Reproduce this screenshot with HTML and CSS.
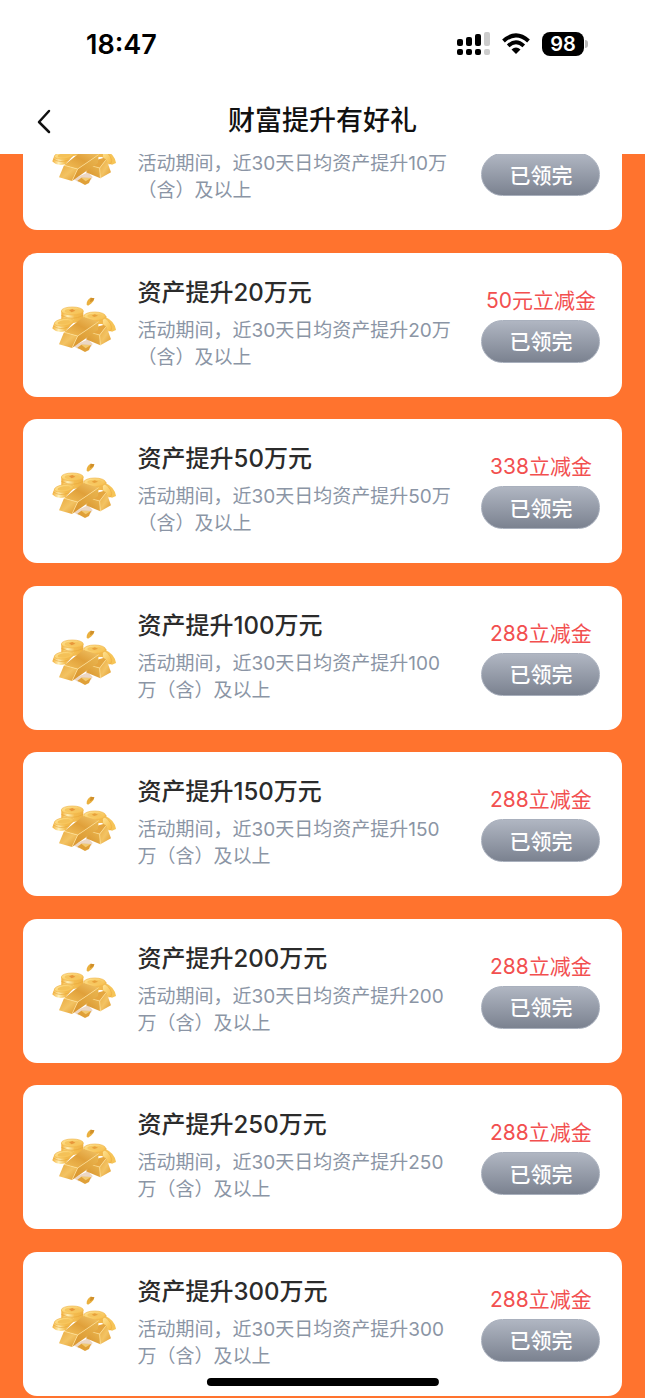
FILE: index.html
```html
<!DOCTYPE html>
<html lang="zh-CN">
<head>
    <meta charset="UTF-8">
    <meta name="viewport" content="width=device-width, initial-scale=1.0">
    <title>财富提升有好礼</title>
    <link rel="stylesheet" href="styles.css">
</head>
<body>
    <!-- shared gold picture -->
    <svg class="defs" width="0" height="0" aria-hidden="true">
        <defs>
            <linearGradient id="coinTop" x1="0" y1="0" x2="1" y2="1">
                <stop offset="0" stop-color="#ffe596"/>
                <stop offset="1" stop-color="#f5b944"/>
            </linearGradient>
            <linearGradient id="coinSide" x1="0" y1="0" x2="1" y2="0">
                <stop offset="0" stop-color="#f3ad35"/>
                <stop offset="0.3" stop-color="#fff0b8"/>
                <stop offset="0.6" stop-color="#f4bd50"/>
                <stop offset="1" stop-color="#eeb044"/>
            </linearGradient>
            <linearGradient id="barTop" x1="0" y1="1" x2="1" y2="0">
                <stop offset="0" stop-color="#f3bf58"/>
                <stop offset="0.5" stop-color="#e0a03a"/>
                <stop offset="1" stop-color="#f2c569"/>
            </linearGradient>
            <linearGradient id="barFront" x1="0" y1="0" x2="1" y2="1">
                <stop offset="0" stop-color="#e9ab42"/>
                <stop offset="0.5" stop-color="#f3c363"/>
                <stop offset="1" stop-color="#e09a2e"/>
            </linearGradient>
            <linearGradient id="barSide" x1="1" y1="0" x2="0" y2="1">
                <stop offset="0" stop-color="#eab650"/>
                <stop offset="1" stop-color="#d8922b"/>
            </linearGradient>
            <symbol id="gold" viewBox="36 30 192 168">
                <path d="M100 180l44-20 14 14-6 10-36 6z" fill="#d9b08a" opacity="0.5"/>
                <path d="M140 56q-1-14 12-21l11 2q0 9-10 16l-9 6z" fill="#eab03f"/>
                <path d="M152 35l11 2q-2 10-13 11z" fill="#cf8f2b"/>
                <!-- coins on the left -->
                <path d="M64 75v27q32 20 66 0V75z" fill="url(#coinSide)"/>
                <path d="M64 88q32 18 66 0" fill="none" stroke="#e9a83a" stroke-width="2"/>
                <ellipse cx="97" cy="75" rx="33" ry="12" fill="url(#coinTop)" stroke="#f0b54a" stroke-width="2"/>
                <ellipse cx="97" cy="75" rx="23" ry="7" fill="#f6c65f"/>
                <path d="M87 73l10-4 9 5-11 5z" fill="#e8963a"/>
                <path d="M43 110l-6 17q14 16 40 8l24-26z" fill="url(#coinSide)"/>
                <path d="M40 120q20 14 48 2" fill="none" stroke="#e9a83a" stroke-width="2"/>
                <ellipse cx="72" cy="109" rx="29" ry="11" fill="url(#coinTop)" stroke="#f0b54a" stroke-width="2" transform="rotate(-8 72 109)"/>
                <ellipse cx="72" cy="109" rx="19" ry="6" fill="#f4c158" transform="rotate(-8 72 109)"/>
                <!-- coins on the right -->
                <path d="M132 88v26h67V90z" fill="url(#coinSide)"/>
                <path d="M196 93q28 12 32 39l-12 5q-10-3-22-17z" fill="#f6c457"/>
                <path d="M190 95q-8 17 7 34 9 9 16 5 5-9-2-21-9-17-21-18z" fill="url(#coinTop)" stroke="#edae43" stroke-width="2"/>
                <ellipse cx="164" cy="91" rx="33" ry="13" fill="url(#coinTop)" stroke="#f0b54a" stroke-width="2"/>
                <ellipse cx="164" cy="90" rx="22" ry="7" fill="#f6c65f"/>
                <path d="M155 89l9-4 10 4-11 4z" fill="#e8a03a"/>
                <!-- small bar behind -->
                <path d="M150 128l40-11 9 4-20 26-31-7z" fill="#e5a63f"/>
                <path d="M150 139l29 8 2 31-43-18z" fill="url(#barSide)"/>
                <path d="M179 147l20-26 14 39-32 18z" fill="url(#barFront)"/>
                <path d="M150 139l29 8 20-26M179 147l2 31" fill="none" stroke="#ffe398" stroke-width="2"/>
                <!-- big bar in front -->
                <path d="M72 139l58-46 46 14-63 43z" fill="url(#barTop)"/>
                <path d="M113 150l63-43-2 25-78 54z" fill="url(#barSide)"/>
                <path d="M72 139l41 11-17 36-39-11z" fill="url(#barFront)"/>
                <path d="M72 139l41 11 63-43M113 150l-17 36" fill="none" stroke="#ffe398" stroke-width="2"/>
                <path d="M112 185l12-9 29 1-6 15-12 6z" fill="#e0a038"/>
                <path d="M124 176l29 1-16 10z" fill="#f3cb72"/>
            </symbol>
        </defs>
    </svg>

    <header class="header">
        <div class="status">
            <span class="time">18:47</span>
            <div class="status-icons">
                <svg width="33" height="24" viewBox="0 0 33 24" aria-hidden="true">
                    <rect x="0" y="7" width="6" height="7" rx="2"/>
                    <rect x="9" y="5" width="6" height="9" rx="2"/>
                    <rect x="18" y="2" width="6" height="12" rx="2"/>
                    <rect x="27" y="0" width="6" height="14" rx="2" fill="#ccc"/>
                    <rect x="0" y="17" width="6" height="6" rx="2"/>
                    <rect x="9" y="17" width="6" height="6" rx="2"/>
                    <rect x="18" y="17" width="6" height="6" rx="2"/>
                    <rect x="27" y="17" width="6" height="6" rx="2" fill="#ccc"/>
                </svg>
                <svg width="28" height="22" viewBox="0 0 28 22" aria-hidden="true">
                    <path d="M1.5 8Q14-3.4 26.5 8" fill="none" stroke="#000" stroke-width="4"/>
                    <path d="M6.2 12.9Q14 5.5 21.8 12.9" fill="none" stroke="#000" stroke-width="3.8"/>
                    <path d="M9.5 16.6Q14 12.5 18.5 16.6L14 21z"/>
                </svg>
                <div class="battery">98</div>
            </div>
        </div>
        <nav class="nav">
            <a class="back" href="#" aria-label="返回">
                <svg width="16" height="26" viewBox="0 0 16 26" aria-hidden="true">
                    <path d="M13 3L3 14l10 10" fill="none" stroke="#111" stroke-width="2.5" stroke-linecap="round" stroke-linejoin="round"/>
                </svg>
            </a>
            <h1>财富提升有好礼</h1>
        </nav>
    </header>

    <main class="list">
        <section class="card">
            <svg class="gold" aria-hidden="true"><use href="#gold"/></svg>
            <div class="info">
                <h2></h2>
                <p>活动期间，近30天日均资产提升10万（含）及以上</p>
            </div>
            <div class="reward">
                <span class="price"></span>
                <button type="button">已领完</button>
            </div>
        </section>
        <section class="card">
            <svg class="gold" aria-hidden="true"><use href="#gold"/></svg>
            <div class="info">
                <h2>资产提升20万元</h2>
                <p>活动期间，近30天日均资产提升20万（含）及以上</p>
            </div>
            <div class="reward">
                <span class="price">50元立减金</span>
                <button type="button">已领完</button>
            </div>
        </section>
        <section class="card">
            <svg class="gold" aria-hidden="true"><use href="#gold"/></svg>
            <div class="info">
                <h2>资产提升50万元</h2>
                <p>活动期间，近30天日均资产提升50万（含）及以上</p>
            </div>
            <div class="reward">
                <span class="price">338立减金</span>
                <button type="button">已领完</button>
            </div>
        </section>
        <section class="card">
            <svg class="gold" aria-hidden="true"><use href="#gold"/></svg>
            <div class="info">
                <h2>资产提升100万元</h2>
                <p>活动期间，近30天日均资产提升100万（含）及以上</p>
            </div>
            <div class="reward">
                <span class="price">288立减金</span>
                <button type="button">已领完</button>
            </div>
        </section>
        <section class="card">
            <svg class="gold" aria-hidden="true"><use href="#gold"/></svg>
            <div class="info">
                <h2>资产提升150万元</h2>
                <p>活动期间，近30天日均资产提升150万（含）及以上</p>
            </div>
            <div class="reward">
                <span class="price">288立减金</span>
                <button type="button">已领完</button>
            </div>
        </section>
        <section class="card">
            <svg class="gold" aria-hidden="true"><use href="#gold"/></svg>
            <div class="info">
                <h2>资产提升200万元</h2>
                <p>活动期间，近30天日均资产提升200万（含）及以上</p>
            </div>
            <div class="reward">
                <span class="price">288立减金</span>
                <button type="button">已领完</button>
            </div>
        </section>
        <section class="card">
            <svg class="gold" aria-hidden="true"><use href="#gold"/></svg>
            <div class="info">
                <h2>资产提升250万元</h2>
                <p>活动期间，近30天日均资产提升250万（含）及以上</p>
            </div>
            <div class="reward">
                <span class="price">288立减金</span>
                <button type="button">已领完</button>
            </div>
        </section>
        <section class="card">
            <svg class="gold" aria-hidden="true"><use href="#gold"/></svg>
            <div class="info">
                <h2>资产提升300万元</h2>
                <p>活动期间，近30天日均资产提升300万（含）及以上</p>
            </div>
            <div class="reward">
                <span class="price">288立减金</span>
                <button type="button">已领完</button>
            </div>
        </section>
    </main>

    <div class="home-bar"></div>
</body>
</html>
```
FILE: styles.css
```css
* {
    box-sizing: border-box;
}

body {
    margin: 0;
    min-height: 100vh;
    background-color: #ff732e;
    font-family: Inter, "Noto Sans CJK SC", sans-serif;
    text-spacing-trim: space-all;
}

h1, h2, p {
    margin: 0;
}

.defs {
    position: absolute;
}

.header {
    position: relative;
    z-index: 1;
    background-color: #fff;
}

/* Status bar */
.status {
    display: flex;
    justify-content: space-between;
    align-items: center;
    height: 88px;
    padding: 0 61px 0 86px;
}

.time {
    font-size: 27px;
    font-weight: 600;
    color: #000;
}

.status-icons {
    display: flex;
    align-items: center;
    gap: 12px;
}

.battery {
    position: relative;
    width: 42px;
    height: 24px;
    border-radius: 8px;
    background-color: #000;
    color: #fff;
    font-size: 20px;
    font-weight: 600;
    line-height: 24px;
    text-align: center;
}

.battery::after {
    content: "";
    position: absolute;
    top: 8px;
    right: -4px;
    width: 3px;
    height: 8px;
    border-radius: 0 3px 3px 0;
    background-color: #bbb;
}

/* Title bar */
.nav {
    display: grid;
    grid-template-columns: 60px 1fr 60px;
    align-items: center;
    height: 66px;
}

.back {
    display: flex;
    justify-content: flex-end;
    padding-right: 8px;
}

.nav h1 {
    font-size: 27px;
    font-weight: 500;
    line-height: 40px;
    text-align: center;
    color: #111;
}

/* Task cards */
.list {
    display: flex;
    flex-direction: column;
    gap: 3.5vw;
    margin-top: -68px;
    padding: 0 3.5vw 2px;
}

.card {
    display: flex;
    align-items: center;
    gap: 22px;
    padding: 24px 22px 26px 29px;
    border-radius: 14px;
    background-color: #fff;
}

.gold {
    flex: none;
    width: 64px;
    height: 56px;
}

.info {
    flex: 1;
}

.info h2 {
    min-height: 32px;
    margin-bottom: 8px;
    font-size: 24px;
    font-weight: 500;
    line-height: 32px;
    color: #2b2b2b;
}

.info p {
    padding-right: 4px;
    font-size: 19px;
    line-height: 27px;
    color: #8b95a5;
}

.reward {
    display: flex;
    flex-direction: column;
    align-items: center;
    gap: 5px;
    width: 119px;
}

.price {
    height: 30px;
    font-size: 21px;
    line-height: 32px;
    white-space: nowrap;
    color: #f24f4f;
}

.reward button {
    width: 100%;
    height: 43px;
    padding: 0 0 2px;
    border: 1px solid #a9b0bd;
    border-radius: 22px;
    background: linear-gradient(#b0b6c2, #7b8290);
    color: #fff;
    font-family: inherit;
    font-size: 21px;
    font-weight: 500;
}

.home-bar {
    position: fixed;
    z-index: 2;
    bottom: 12px;
    left: 50%;
    width: 36vw;
    height: 8px;
    border-radius: 4px;
    background-color: #000;
    transform: translateX(-50%);
}
```
